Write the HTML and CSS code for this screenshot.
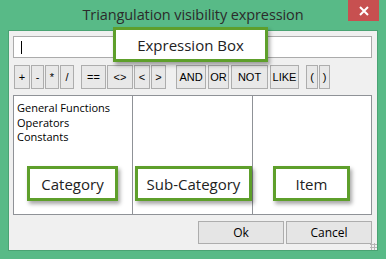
FILE: index.html
```html
<!DOCTYPE html>
<html>
<head>
    <title>Triangulation visibility expression</title>
    <link rel="stylesheet" href="styles.css">
</head>
<body>
    <div class="window">
        <div class="titlebar">
            <span></span>
            <span class="title">Triangulation visibility expression</span>
            <button class="close" title="Close">
                <svg width="10" height="10" viewBox="0 0 10 10"><path d="M1 1 L9 9 M9 1 L1 9" stroke="#fff" stroke-width="2"/></svg>
            </button>
        </div>

        <div class="client">
            <div class="expr"><span class="caret"></span></div>

            <div class="toolbar">
                <div class="group">
                    <button class="op w16">+</button>
                    <button class="op w13">-</button>
                    <button class="op w14">*</button>
                    <button class="op w14">/</button>
                </div>
                <div class="group">
                    <button class="op w25">==</button>
                    <button class="op w26">&lt;&gt;</button>
                    <button class="op w16">&lt;</button>
                    <button class="op w15">&gt;</button>
                </div>
                <div class="group wide">
                    <button class="op w30">AND</button>
                    <button class="op w21">OR</button>
                    <button class="op w37">NOT</button>
                    <button class="op w29">LIKE</button>
                </div>
                <div class="group">
                    <button class="op w12">(</button>
                    <button class="op w11">)</button>
                </div>
            </div>

            <div class="lists">
                <ul class="pane">
                    <li>General Functions</li>
                    <li>Operators</li>
                    <li>Constants</li>
                </ul>
                <ul class="pane"></ul>
                <ul class="pane"></ul>
            </div>

            <div class="footer">
                <button class="dlg">Ok</button>
                <button class="dlg">Cancel</button>
                <span class="grip"></span>
            </div>

            <!-- callouts laid over the dialog -->
            <div class="callout expr-call">Expression Box</div>
            <div class="callout cat-call">Category</div>
            <div class="callout sub-call">Sub-Category</div>
            <div class="callout item-call">Item</div>
        </div>
    </div>
</body>
</html>
```

FILE: styles.css
```css
body { margin: 0; font-family: "Open Sans", "Noto Sans", sans-serif; }
.window { width: 386px; height: 259px; box-sizing: border-box; background: #58ba87; padding: 0 8px 8px 8px; display: flex; flex-direction: column; }
.titlebar { height: 30px; display: grid; grid-template-columns: 1fr auto 1fr; align-items: start; }
.title { font-size: 14.5px; color: #2b2b2b; line-height: 30px; letter-spacing: -0.1px; }
.close { justify-self: end; width: 31px; height: 21px; margin-right: -1px; border: none; background: #c75050; padding: 0; display: flex; align-items: center; justify-content: center; }

.client { position: relative; flex: 1; background: #f0f0f0; border: 1px solid #4aa373; padding: 5px 5px 0 4px; display: flex; flex-direction: column; }
.expr { height: 22px; box-sizing: border-box; background: #fff; border: 1px solid #ababab; display: flex; align-items: center; padding-left: 7px; }
.caret { width: 1px; height: 13px; background: #000; }

.toolbar { display: flex; margin: 7px 0 0 1px; height: 24px; }
.group { display: flex; gap: 1px; margin-right: 7px; }
.group.wide { margin-right: 7px; gap: 2px; }
.group:nth-child(2) { margin-right: 10px; }
.op { height: 24px; padding: 0; background: #e8e8e8; border: 1px solid #adadad; font-family: "Liberation Sans", Arial, sans-serif; font-size: 11px; color: #000; }
.w11 { width: 11px; } .w12 { width: 12px; } .w13 { width: 13px; } .w14 { width: 14px; }
.w15 { width: 15px; } .w16 { width: 16px; } .w21 { width: 21px; } .w25 { width: 25px; }
.w26 { width: 26px; } .w29 { width: 29px; } .w30 { width: 30px; } .w37 { width: 37px; }

.lists { display: flex; margin-top: 6px; height: 120px; box-sizing: border-box; border: 1px solid #8f9297; background: #fff; }
.pane { flex: 1; margin: 0; padding: 5px 0 0 3px; list-style: none; font-size: 11px; line-height: 14.5px; color: #000; }
.pane + .pane { border-left: 1px solid #8f9297; }

.footer { display: flex; justify-content: flex-end; gap: 2px; margin-top: 6px; position: relative; }
.dlg { width: 86px; height: 23px; background: #e5e5e5; border: 1px solid #adadad; font-family: "Open Sans", sans-serif; font-size: 12px; color: #000; padding: 0; }
.grip { position: absolute; right: -5px; bottom: -6px; width: 7px; height: 7px; background: radial-gradient(circle, #b5b5b5 1px, transparent 1.2px) 0 0 / 3px 3px; }

.callout { position: absolute; background: #fff; border: 3px solid #5e9f2b; box-shadow: 2px 3px 4px rgba(0, 0, 0, 0.35); box-sizing: border-box; display: flex; align-items: center; justify-content: center; font-size: 15px; color: #222; }
.expr-call { left: 104px; top: -4px; width: 155px; height: 35px; }
.cat-call { left: 18px; top: 135px; width: 91px; height: 35px; }
.sub-call { left: 126px; top: 135px; width: 117px; height: 35px; }
.item-call { left: 264px; top: 135px; width: 77px; height: 35px; }
```
